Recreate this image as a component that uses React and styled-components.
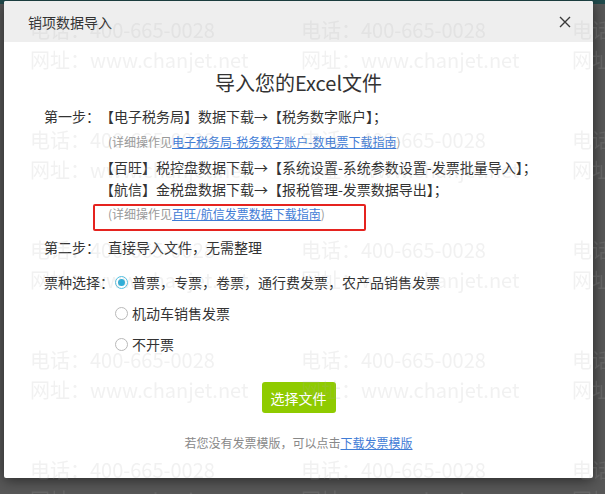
import React from "react";
import styled, { createGlobalStyle } from "styled-components";

const GlobalStyle = createGlobalStyle`
  html, body {
    margin: 0;
    padding: 0;
  }
  body {
    width: 605px;
    height: 494px;
    overflow: hidden;
    background: linear-gradient(#214b4d 0, #214b4d 4px, #585858 4px);
    font-family: "Noto Sans CJK SC", "Liberation Sans", sans-serif;
    color: #333;
  }
`;

const Page = styled.div`
  width: 605px;
  height: 494px;
  padding: 1px 0 0 4px;
  box-sizing: border-box;
`;

const Modal = styled.div`
  width: 589px;
  height: 477px;
  background: #fff;
  border-radius: 2px;
  box-shadow: 0 2px 14px rgba(0, 0, 0, 0.55);
  display: flex;
  flex-direction: column;
  overflow: hidden;
`;

const Header = styled.div`
  height: 41px;
  flex: none;
  background: #eeeeee;
  display: flex;
  align-items: center;
  justify-content: space-between;
  padding: 0 21px 0 24px;
  font-size: 14px;
  color: #333;
`;

const CloseButton = styled.button`
  border: 0;
  background: none;
  padding: 0;
  width: 14px;
  height: 14px;
  display: flex;
  align-items: center;
  justify-content: center;
  cursor: pointer;
`;

const Body = styled.div`
  flex: 1;
  display: flex;
  flex-direction: column;
  padding: 0 20px 0 40px;
`;

const Title = styled.h2`
  margin: 27px 0 0 -20px;
  font-size: 20px;
  line-height: 28px;
  font-weight: normal;
  text-align: center;
  color: #333;
`;

const Row = styled.div`
  display: flex;
  align-items: flex-start;
  margin-top: ${(p) => p.$top || 0}px;
  font-size: 14px;
  line-height: 22px;
`;

const Label = styled.div`
  flex: none;
  width: ${(p) => p.$width || 56}px;
  white-space: nowrap;
`;

const Content = styled.div`
  display: flex;
  flex-direction: column;
  align-items: flex-start;
`;

const Line = styled.div`
  margin-top: ${(p) => p.$top || 0}px;
  white-space: nowrap;
`;

const Detail = styled.div`
  margin: 4px 0 3px 8px;
  font-size: 12px;
  line-height: 22px;
  color: #999;
  white-space: nowrap;
`;

const MarkedDetail = styled(Detail)`
  width: 273px;
  box-sizing: border-box;
  margin: 4px 0 0 -7px;
  padding: 0 0 7px 13px;
  line-height: 16px;
  border: 2px solid #e5231f;
  border-radius: 2px;
`;

const Link = styled.a`
  color: #3f7cd6;
  text-decoration: underline;
  cursor: pointer;
`;

const Options = styled.div`
  display: flex;
  flex-direction: column;
  gap: 9px;
`;

const Option = styled.label`
  display: flex;
  align-items: center;
  gap: 4px;
  white-space: nowrap;
`;

const Radio = styled.span`
  flex: none;
  width: 13px;
  height: 13px;
  margin-left: 1px;
  border-radius: 50%;
  box-sizing: border-box;
  border: 1px solid ${(p) => (p.$checked ? "#52c0e2" : "#b9b9b9")};
  display: flex;
  align-items: center;
  justify-content: center;
  &::after {
    content: "";
    width: 7px;
    height: 7px;
    border-radius: 50%;
    background: ${(p) => (p.$checked ? "#2eaed8" : "transparent")};
  }
`;

const Actions = styled.div`
  display: flex;
  flex-direction: column;
  align-items: center;
  margin: 27px 0 0 -20px;
`;

const PrimaryButton = styled.button`
  width: 74px;
  height: 31px;
  border: 0;
  border-radius: 3px;
  background: #8fcb00;
  color: #fff;
  font-family: inherit;
  font-size: 14px;
  cursor: pointer;
`;

const Hint = styled.div`
  margin-top: 21px;
  font-size: 12px;
  line-height: 18px;
  color: #888;
`;

const Watermark = styled.div`
  position: fixed;
  inset: 0;
  pointer-events: none;
  overflow: hidden;
  display: grid;
  grid-template-columns: repeat(3, 271px);
  grid-auto-rows: 110px;
  padding-left: 30px;
  z-index: 10;
`;

const Mark = styled.div`
  padding-top: 15px;
  font-size: 20px;
  line-height: 30px;
  color: rgba(170, 170, 170, 0.17);
  white-space: nowrap;
`;

function CloseIcon() {
  return (
    <svg width="12" height="12" viewBox="0 0 12 12">
      <path d="M1 1L11 11M11 1L1 11" stroke="#3a3a3a" strokeWidth="1.4" />
    </svg>
  );
}

const invoiceTypes = [
  { text: "普票，专票，卷票，通行费发票，农产品销售发票", checked: true },
  { text: "机动车销售发票" },
  { text: "不开票" },
];

export default function App() {
  const marks = Array.from({ length: 15 });
  return (
    <>
      <GlobalStyle />
      <Page>
        <Modal>
          <Header>
            <span>销项数据导入</span>
            <CloseButton aria-label="关闭">
              <CloseIcon />
            </CloseButton>
          </Header>
          <Body>
            <Title>导入您的Excel文件</Title>
            <Row $top={8}>
              <Label>第一步：</Label>
              <Content>
                <Line>【电子税务局】数据下载→【税务数字账户】；</Line>
                <Detail>
                  (详细操作见<Link>电子税务局-税务数字账户-数电票下载指南</Link>)
                </Detail>
                <Line>【百旺】税控盘数据下载→【系统设置-系统参数设置-发票批量导入】；</Line>
                <Line>【航信】金税盘数据下载→【报税管理-发票数据导出】；</Line>
                <MarkedDetail>
                  (详细操作见<Link>百旺/航信发票数据下载指南</Link>)
                </MarkedDetail>
              </Content>
            </Row>
            <Row $top={5}>
              <Label $width={64}>第二步：</Label>
              <Content>直接导入文件，无需整理</Content>
            </Row>
            <Row $top={13}>
              <Label $width={70}>票种选择：</Label>
              <Options>
                {invoiceTypes.map((t) => (
                  <Option key={t.text}>
                    <Radio $checked={t.checked} />
                    {t.text}
                  </Option>
                ))}
              </Options>
            </Row>
            <Actions>
              <PrimaryButton>选择文件</PrimaryButton>
              <Hint>
                若您没有发票模版，可以点击<Link>下载发票模版</Link>
              </Hint>
            </Actions>
          </Body>
        </Modal>
      </Page>
      <Watermark>
        {marks.map((_, i) => (
          <Mark key={i}>
            电话：400-665-0028
            <br />
            网址：www.chanjet.net
          </Mark>
        ))}
      </Watermark>
    </>
  );
}
